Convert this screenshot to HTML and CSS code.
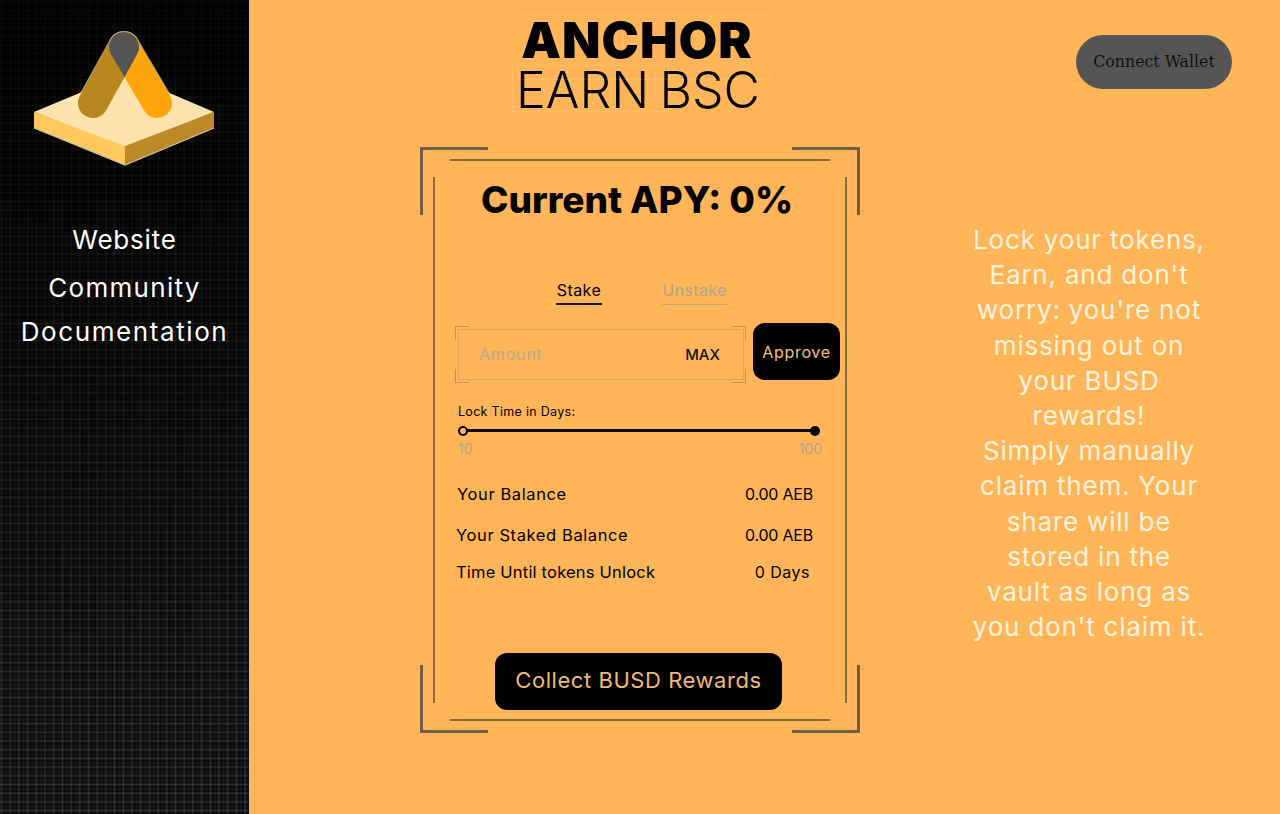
FILE: index.html
```html
<!DOCTYPE html>
<html lang="en">
<head>
<meta charset="utf-8">
<title>Anchor Earn BSC</title>
<link rel="stylesheet" href="styles.css">
</head>
<body>
<aside class="sidebar">
  <svg class="emblem" width="249" height="175" viewBox="0 0 249 175" aria-hidden="true">
    <defs>
      <mask id="overlap" maskUnits="userSpaceOnUse" x="0" y="0" width="249" height="175">
        <line x1="124" y1="47" x2="93" y2="103" stroke="#fff" stroke-width="30" stroke-linecap="round"/>
      </mask>
    </defs>
    <line x1="124" y1="47" x2="93" y2="103" stroke="#a89d88" stroke-width="32" stroke-linecap="round"/>
    <line x1="124" y1="47" x2="157" y2="103" stroke="#a89d88" stroke-width="32" stroke-linecap="round"/>
    <path d="M34 112 L125 74 L214 112 L125 148 Z" fill="#ffe3ae"/>
    <path d="M34 112 L125 146 L125 165 L34 128 Z" fill="#ffc95c"/>
    <path d="M125 146 L214 112 L214 128 L125 165 Z" fill="#bd8a28"/>
    <path d="M34 128 L125 165 L214 128" fill="none" stroke="#c9c0aa" stroke-width="1.2"/>
    <line x1="124" y1="47" x2="93" y2="103" stroke="#b8871e" stroke-width="30" stroke-linecap="round"/>
    <line x1="124" y1="47" x2="157" y2="103" stroke="#ffa50a" stroke-width="30" stroke-linecap="round"/>
    <line x1="124" y1="47" x2="157" y2="103" stroke="#555555" stroke-width="30" stroke-linecap="round" mask="url(#overlap)"/>
  </svg>
  <nav class="nav">
    <a class="nav-link">Website</a>
    <a class="nav-link">Community</a>
    <a class="nav-link">Documentation</a>
  </nav>
</aside>

<main class="main">
  <header class="topbar">
    <div class="brand">
      <div class="brand-top">ANCHOR</div>
      <div class="brand-bottom"><span>EARN</span><span>BSC</span></div>
    </div>
    <button class="wallet">Connect Wallet</button>
  </header>

  <div class="content">
    <section class="card">
      <i class="corner tl"></i><i class="corner tr"></i><i class="corner bl"></i><i class="corner br"></i>
      <i class="rule top"></i><i class="rule bottom"></i><i class="rule left"></i><i class="rule right"></i>

      <h1 class="apy">Current APY: 0%</h1>

      <div class="tabs">
        <span class="tab active">Stake</span>
        <span class="tab">Unstake</span>
      </div>

      <div class="stake-row">
        <div class="amount">
          <i class="tick a"></i><i class="tick b"></i><i class="tick c"></i><i class="tick d"></i>
          <span class="placeholder">Amount</span>
          <span class="max">MAX</span>
        </div>
        <button class="approve">Approve</button>
      </div>

      <div class="lock">
        <div class="lock-label">Lock Time in Days:</div>
        <div class="slider"><i class="thumb open"></i><i class="thumb full"></i></div>
        <div class="scale"><span>10</span><span>100</span></div>
      </div>

      <dl class="stats">
        <div class="stat first"><dt>Your Balance</dt><dd>0.00 AEB</dd></div>
        <div class="stat second"><dt>Your Staked Balance</dt><dd>0.00 AEB</dd></div>
        <div class="stat third"><dt>Time Until tokens Unlock</dt><dd>0 Days</dd></div>
      </dl>

      <button class="collect">Collect BUSD Rewards</button>
    </section>

    <p class="blurb">Lock your tokens,<br>Earn, and don't<br>worry: you're not<br>missing out on<br>your BUSD<br>rewards!<br>Simply manually<br>claim them. Your<br>share will be<br>stored in the<br>vault as long as<br>you don't claim it.</p>
  </div>
</main>
</body>
</html>
```
FILE: styles.css
```css
* { box-sizing: border-box; }
html, body { margin: 0; height: 100%; }
body {
  display: flex;
  height: 814px;
  overflow: hidden;
  background: #ffb558;
  font-family: "Inter", "Liberation Sans", sans-serif;
  color: #000;
}
.sidebar {
  width: 249px;
  flex: none;
  background-color: #070707;
  background-image:
    linear-gradient(to bottom, rgba(0,0,0,.85) 0, rgba(0,0,0,.6) 40%, rgba(0,0,0,.15) 100%),
    repeating-linear-gradient(to right, rgba(255,255,255,.02) 0, rgba(255,255,255,.16) 1.5px, rgba(255,255,255,.02) 3px, transparent 4.3px, rgba(255,255,255,.05) 6px, transparent 8.7px),
    repeating-linear-gradient(to bottom, rgba(255,255,255,.02) 0, rgba(255,255,255,.16) 1.5px, rgba(255,255,255,.02) 3px, transparent 4.3px, rgba(255,255,255,.05) 6px, transparent 8.7px);
}
.emblem { display: block; }
.nav {
  display: flex;
  flex-direction: column;
  align-items: center;
  margin-top: 47px;
}
.nav-link {
  color: #fff;
  font-size: 26px;
  line-height: 36px;
  letter-spacing: .8px;
}
.nav-link:nth-child(2) { margin-top: 12px; letter-spacing: 1.3px; }
.nav-link:nth-child(3) { margin-top: 8px; letter-spacing: 1.6px; }

.main { flex: 1; min-width: 0; display: flex; flex-direction: column; }
.topbar {
  position: relative;
  height: 147px;
  display: flex;
  justify-content: flex-end;
  padding: 35px 48px 0 0;
}
.brand {
  position: absolute;
  left: 267px;
  top: 14px;
  width: 244px;
}
.brand::before,
.brand::after {
  content: "";
  position: absolute;
  border: 1px solid rgba(255,255,255,.12);
  pointer-events: none;
}
.brand::before { left: 1px; top: 0; width: 252px; height: 64px; }
.brand::after { left: -4px; top: 51px; width: 155px; height: 45px; }
.brand-top {
  padding-right: 2px;
  font-size: 50px;
  line-height: 52px;
  font-weight: 900;
  letter-spacing: 1px;
  text-align: center;
}
.brand-bottom {
  display: flex;
  justify-content: space-between;
  font-size: 50px;
  line-height: 48px;
  font-weight: 300;
}
.wallet {
  width: 156px;
  height: 54px;
  border: 0;
  border-radius: 27px;
  background: #555;
  color: #111;
  font-family: "DejaVu Serif", serif;
  font-size: 15.8px;
  padding: 0 0 2px;
}
.content { display: flex; align-items: flex-start; padding-left: 171px; }
.card {
  position: relative;
  width: 440px;
  height: 586px;
  padding: 29px 20px 0 35px;
  display: flex;
  flex-direction: column;
}
.corner { position: absolute; width: 68px; height: 68px; border: 0 solid #705f45; }
.corner.tl { left: 0; top: 0; border-width: 3px 0 0 3px; }
.corner.tr { right: 0; top: 0; border-width: 3px 3px 0 0; }
.corner.bl { left: 0; bottom: 0; border-width: 0 0 3px 3px; }
.corner.br { right: 0; bottom: 0; border-width: 0 3px 3px 0; }
.rule { position: absolute; background: #85693f; }
.rule.top { left: 30px; right: 30px; top: 12px; height: 2px; }
.rule.bottom { left: 30px; right: 30px; bottom: 12px; height: 2px; }
.rule.left { left: 13px; top: 30px; bottom: 30px; width: 2px; }
.rule.right { right: 13px; top: 30px; bottom: 30px; width: 2px; }

.apy {
  margin: 0;
  padding-right: 21px;
  font-size: 37px;
  line-height: 48px;
  font-weight: 800;
  text-align: center;
  white-space: nowrap;
}
.tabs {
  display: flex;
  margin-top: 54px;
  padding-left: 101px;
  gap: 60px;
  font-size: 16px;
  line-height: 24px;
  letter-spacing: .4px;
}
.tab { color: #aca596; padding-bottom: 1px; border-bottom: 1px solid #c2a578; width: 65px; text-align: center; white-space: nowrap; }
.tab.active { color: #000; border-bottom: 2px solid #1c140a; width: 46px; }

.stake-row { display: flex; align-items: flex-start; margin-top: 18px; }
.amount {
  position: relative;
  width: 286px;
  height: 51px;
  margin: 6px 0 0 3px;
  border: 1px solid #d9a565;
  display: flex;
  align-items: center;
  justify-content: space-between;
  padding: 0 23px 0 20px;
  font-size: 16px;
}
.placeholder { color: #b8aa94; letter-spacing: .8px; margin-bottom: 2px; }
.max { font-weight: 500; font-size: 15px; color: #111; }
.tick { position: absolute; width: 14px; height: 14px; border: 0 solid #b99358; }
.tick.a { left: -4px; top: -4px; border-width: 1px 0 0 1px; }
.tick.b { right: -3px; top: -4px; border-width: 1px 1px 0 0; }
.tick.c { left: -4px; bottom: -4px; border-width: 0 0 1px 1px; }
.tick.d { right: -3px; bottom: -4px; border-width: 0 1px 1px 0; }
.approve {
  width: 87px;
  height: 57px;
  margin-left: 9px;
  border: 0;
  border-radius: 12px;
  background: #000;
  color: #f3c07a;
  font-family: inherit;
  font-size: 16px;
  letter-spacing: .7px;
  padding: 0;
}
.lock { margin-top: 23px; padding-left: 3px; width: 367px; }
.lock-label { font-size: 12.5px; line-height: 18px; letter-spacing: .3px; }
.slider {
  position: relative;
  height: 3px;
  margin: 8px 7px 0 5px;
  background: #0f0a04;
}
.thumb { position: absolute; top: -3px; width: 10px; height: 10px; border-radius: 50%; }
.thumb.open { left: -5px; background: #ffb558; border: 2px solid #000; }
.thumb.full { right: -5px; background: #000; }
.scale {
  display: flex;
  justify-content: space-between;
  margin-top: 8px;
  font-size: 14px;
  line-height: 18px;
  color: #b3a794;
}
.stats { margin: 0; width: 358px; }
.stat { display: flex; justify-content: space-between; font-size: 16.5px; line-height: 24px; }
.stat dt { white-space: nowrap; letter-spacing: .6px; }
.stat dd { margin: 0; white-space: nowrap; font-size: 16px; letter-spacing: -.2px; }
.stat.first { margin-top: 24px; padding-left: 2px; }
.stat.second { margin-top: 17px; padding-left: 1px; }
.stat.third { margin-top: 13px; padding: 0 3px 0 1px; }
.stat.third dt { letter-spacing: .2px; }
.stat.third dd { letter-spacing: .5px; }
.collect {
  width: 287px;
  height: 57px;
  margin: 69px 0 0 40px;
  border: 0;
  border-radius: 12px;
  background: #000;
  color: #efbb74;
  font-family: inherit;
  font-size: 22px;
  letter-spacing: .55px;
  padding: 0 0 3px;
}
.blurb {
  margin: 75px 0 0 99px;
  width: 260px;
  color: #fff2de;
  font-size: 26px;
  line-height: 35.2px;
  letter-spacing: .8px;
  text-align: center;
  white-space: nowrap;
}
```
